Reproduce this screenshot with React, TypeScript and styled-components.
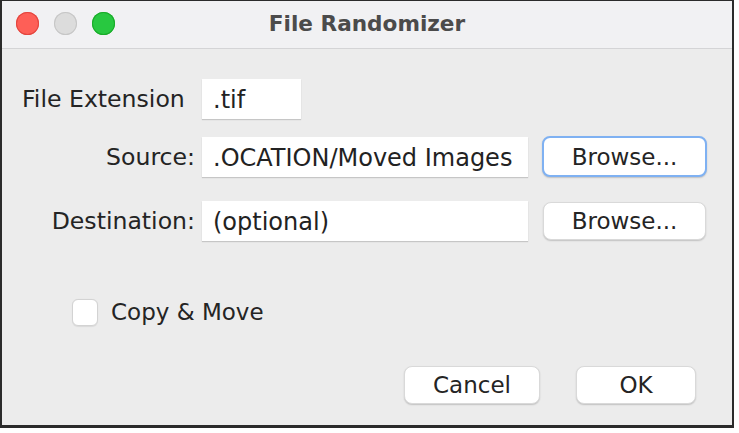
import React from "react";
import styled, { createGlobalStyle } from "styled-components";

const Global = createGlobalStyle`
  html, body { margin: 0; padding: 0; background: #ffffff; }
  body { font-family: "DejaVu Sans", "Liberation Sans", sans-serif; }
  * { box-sizing: border-box; }
`;

const Window = styled.div`
  width: 734px;
  height: 428px;
  border: 2px solid #2b2b2b;
  border-top-width: 1px;
  border-bottom-width: 3px;
  background: #ececec;
  display: flex;
  flex-direction: column;
`;

const TitleBar = styled.div`
  height: 48px;
  background: #f1f1f3;
  border-bottom: 1px solid #d4d4d6;
  display: flex;
  align-items: center;
  position: relative;
  padding: 0 0 2px 14px;
`;

const Lights = styled.div`
  display: flex;
  gap: 15px;
`;

const Light = styled.span<{ $fill: string; $ring: string }>`
  width: 23px;
  height: 23px;
  border-radius: 50%;
  background: ${(p) => p.$fill};
  box-shadow: inset 0 0 0 1px ${(p) => p.$ring};
`;

const Title = styled.div`
  position: absolute;
  left: 0;
  right: 0;
  top: 0;
  bottom: 2px;
  display: flex;
  align-items: center;
  justify-content: center;
  font-weight: bold;
  font-size: 21.6px;
  color: #4b4b4b;
  pointer-events: none;
`;

const Content = styled.div`
  flex: 1;
  display: flex;
  flex-direction: column;
  padding: 30px 0 0 20px;
  color: #242424;
`;

const Row = styled.div<{ $top: number }>`
  display: grid;
  grid-template-columns: 173px 326px 164px;
  column-gap: 7px;
  align-items: center;
  margin-top: ${(p) => p.$top}px;
  height: 40px;
`;

const Label = styled.label<{ $align: "start" | "end" }>`
  justify-self: ${(p) => p.$align};
  font-size: 23.6px;
  line-height: 40px;
  white-space: nowrap;
`;

const Field = styled.div<{ $width?: number }>`
  width: ${(p) => (p.$width ? `${p.$width}px` : "100%")};
  height: 40px;
  background: #ffffff;
  box-shadow: 0 1px 1px rgba(0, 0, 0, 0.16);
  padding: 3px 0 0 11px;
  font-size: 24px;
  line-height: 37px;
  white-space: nowrap;
  overflow: hidden;
  color: #222;
`;

const Button = styled.div<{ $focused?: boolean; $width: number; $height: number }>`
  width: ${(p) => p.$width}px;
  height: ${(p) => p.$height}px;
  background: #ffffff;
  border-radius: 8px;
  border: ${(p) => (p.$focused ? "2px solid #7fb1f2" : "1px solid #d9d9d9")};
  box-shadow: 0 1px 1.5px rgba(0, 0, 0, 0.18);
  display: flex;
  align-items: center;
  justify-content: center;
  font-size: 23px;
  color: #242424;
  white-space: nowrap;
`;

const BrowseButton = styled(Button)<{ $shift: number }>`
  margin-left: ${(p) => p.$shift}px;
`;

const CheckRow = styled.div`
  display: flex;
  align-items: center;
  gap: 13px;
  margin: 57px 0 0 50px;
  height: 28px;
  font-size: 23px;
`;

const Box = styled.span`
  width: 26px;
  height: 27px;
  border-radius: 6px;
  background: #ffffff;
  border: 1px solid #d3d3d3;
  box-shadow: 0 0.5px 1px rgba(0, 0, 0, 0.08);
`;

const Footer = styled.div`
  display: flex;
  justify-content: flex-end;
  gap: 36px;
  margin-top: 40px;
  padding-right: 36px;
`;

export default function App() {
  return (
    <>
      <Global />
      <Window>
        <TitleBar>
          <Lights>
            <Light $fill="#fe5f57" $ring="#e2463f" />
            <Light $fill="#dcdcdc" $ring="#c6c6c6" />
            <Light $fill="#28c840" $ring="#1aab29" />
          </Lights>
          <Title>File Randomizer</Title>
        </TitleBar>
        <Content>
          <Row $top={0}>
            <Label $align="start">File Extension</Label>
            <Field $width={99}>.tif</Field>
          </Row>
          <Row $top={17}>
            <Label $align="end">Source:</Label>
            <Field>.OCATION/Moved Images</Field>
            <BrowseButton $focused $shift={7} $width={165} $height={41}>
              Browse...
            </BrowseButton>
          </Row>
          <Row $top={25}>
            <Label $align="end">Destination:</Label>
            <Field>(optional)</Field>
            <BrowseButton $shift={8} $width={163} $height={38}>
              Browse...
            </BrowseButton>
          </Row>
          <CheckRow>
            <Box />
            <span>Copy &amp; Move</span>
          </CheckRow>
          <Footer>
            <Button $width={136} $height={38}>Cancel</Button>
            <Button $width={120} $height={38}>OK</Button>
          </Footer>
        </Content>
      </Window>
    </>
  );
}
